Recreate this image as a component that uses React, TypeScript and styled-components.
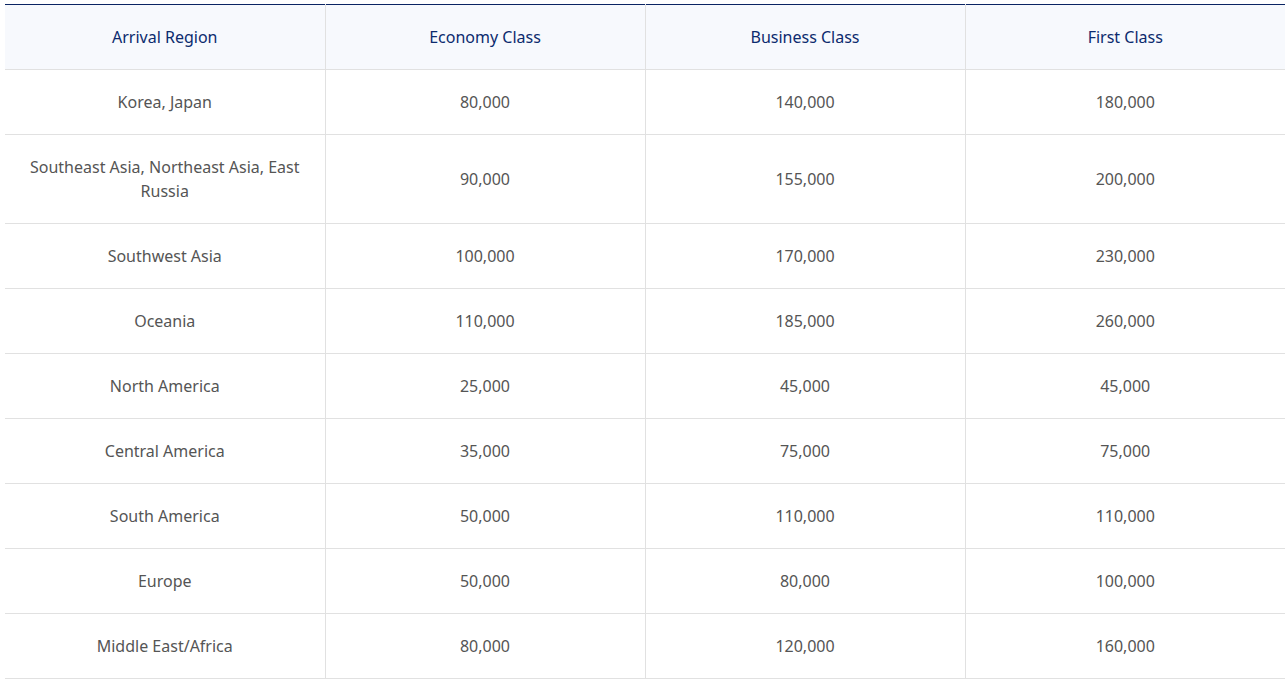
import styled, { createGlobalStyle } from "styled-components";

const GlobalStyle = createGlobalStyle`
    body {
        margin: 0;
        background: #ffffff;
        font-family: "Noto Sans", "Open Sans", sans-serif;
    }
`;

const Wrapper = styled.div`
    padding: 4px 3px 0 5px;
`;

const Table = styled.table`
    width: 100%;
    border-collapse: collapse;
    table-layout: fixed;
    border-top: 1px solid #0a2463;
`;

const HeadCell = styled.th`
    height: 64px;
    padding: 0 20px;
    background-color: #f7f9fd;
    color: #0c2b6e;
    font-size: 16px;
    font-weight: 400;
    line-height: 24px;
    text-align: center;
    border-bottom: 1px solid #e1e1e1;
    & + & {
        border-left: 1px solid #e1e1e1;
    }
`;

const Cell = styled.td`
    padding: 20px 20px;
    color: #555555;
    font-size: 16px;
    line-height: 24px;
    text-align: center;
    border-bottom: 1px solid #e1e1e1;
    & + & {
        border-left: 1px solid #e1e1e1;
    }
`;

const headers = ["Arrival Region", "Economy Class", "Business Class", "First Class"];

const rows: [string, string, string, string][] = [
    ["Korea, Japan", "80,000", "140,000", "180,000"],
    ["Southeast Asia, Northeast Asia, East Russia", "90,000", "155,000", "200,000"],
    ["Southwest Asia", "100,000", "170,000", "230,000"],
    ["Oceania", "110,000", "185,000", "260,000"],
    ["North America", "25,000", "45,000", "45,000"],
    ["Central America", "35,000", "75,000", "75,000"],
    ["South America", "50,000", "110,000", "110,000"],
    ["Europe", "50,000", "80,000", "100,000"],
    ["Middle East/Africa", "80,000", "120,000", "160,000"],
];

export default function App() {
    return (
        <>
            <GlobalStyle />
            <Wrapper>
                <Table>
                    <thead>
                        <tr>
                            {headers.map((h) => (
                                <HeadCell key={h}>{h}</HeadCell>
                            ))}
                        </tr>
                    </thead>
                    <tbody>
                        {rows.map((row) => (
                            <tr key={row[0]}>
                                {row.map((value, i) => (
                                    <Cell key={i}>{value}</Cell>
                                ))}
                            </tr>
                        ))}
                    </tbody>
                </Table>
            </Wrapper>
        </>
    );
}
